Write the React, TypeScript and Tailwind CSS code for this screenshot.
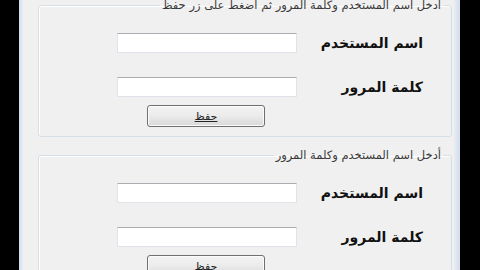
import React from "react"

function Row({ label }: { label: string }) {
  return (
    <div className="flex items-center pr-[28px]">
      <div className="w-[126px] text-[14px] font-bold leading-[20px] text-[#111]">{label}</div>
      <input
        className="h-[20px] w-[180px] border border-[#e2e3ea] border-t-[#abadb3] bg-white outline-none"
        readOnly
      />
    </div>
  )
}

function Group({ title }: { title: string }) {
  return (
    <fieldset
      dir="rtl"
      className="ml-[15px] mr-[2px] min-w-0 rounded-[3px] border border-[#d5dfe5] px-0 pb-[9px] pt-0 shadow-[inset_1px_1px_0_#ffffff]"
    >
      <legend className="mr-[8px] px-[2px] text-[11.5px] leading-[14px] text-[#3a3a3a]">{title}</legend>
      <div className="mt-[21px] flex flex-col gap-[24px]">
        <Row label="اسم المستخدم" />
        <Row label="كلمة المرور" />
      </div>
      <div className="mt-[8px] flex pr-[186px]">
        <button className="h-[22px] w-[118px] rounded-[3px] border border-[#707070] bg-gradient-to-b from-[#f3f3f3] via-[#ebebeb] to-[#d8d8d8] text-[11px] leading-none text-[#222] shadow-[inset_0_0_0_1px_#fbfbfb]">
          <span className="underline">حفظ</span>
        </button>
      </div>
    </fieldset>
  )
}

export default function App() {
  return (
    <div
      className="flex h-[270px] w-[480px] overflow-hidden bg-black"
      style={{ fontFamily: '"DejaVu Sans", Tahoma, sans-serif' }}
    >
      <div className="w-[19px] shrink-0" />
      <div className="w-[4px] shrink-0 bg-gradient-to-r from-[#d3deeb] to-[#e6edf5]" />
      <div className="flex w-[431px] shrink-0 flex-col gap-[11px] bg-[#f0f0f0] [&>fieldset:first-child]:-mt-[2px]">
        <Group title="أدخل اسم المستخدم وكلمة المرور ثم أضغط على زر حفظ" />
        <Group title="أدخل اسم المستخدم وكلمة المرور" />
      </div>
      <div className="w-[6px] shrink-0 bg-gradient-to-r from-[#e6edf5] to-[#d3deeb]" />
      <div className="flex-1" />
    </div>
  )
}
